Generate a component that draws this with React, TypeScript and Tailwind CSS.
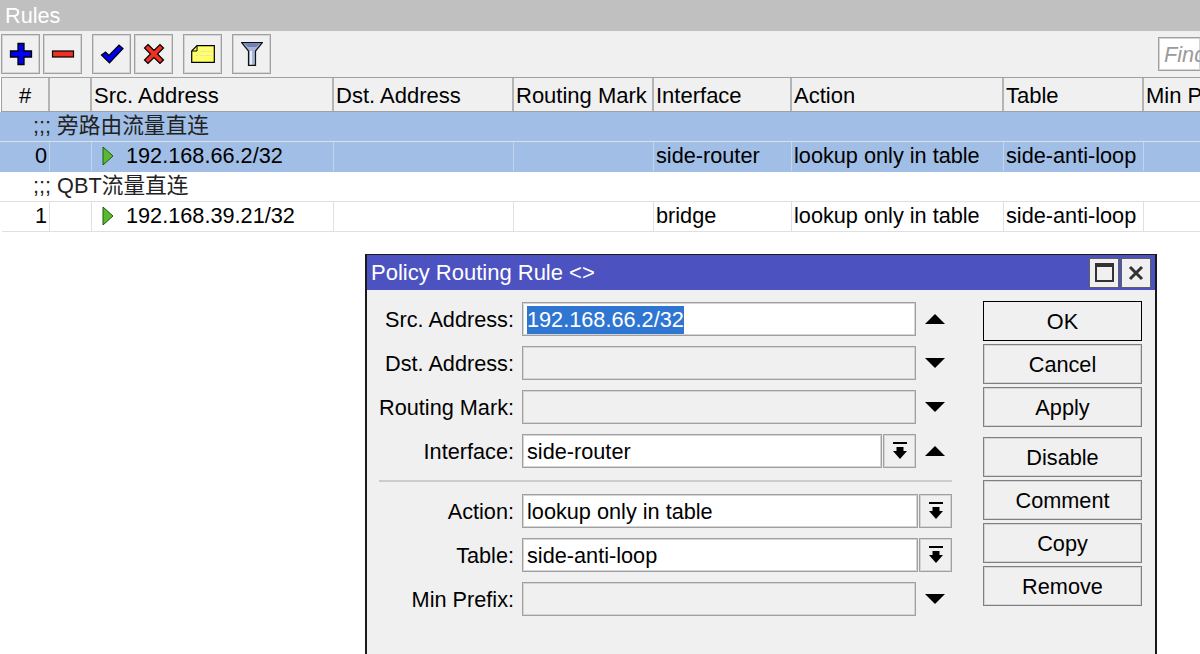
import type { ReactNode } from "react";

const columns = [
  { name: "#", width: "w-[48px] justify-center pr-[2px]" },
  { name: "", width: "w-[42px]" },
  { name: "Src. Address", width: "w-[242px]" },
  { name: "Dst. Address", width: "w-[180px]" },
  { name: "Routing Mark", width: "w-[140px]" },
  { name: "Interface", width: "w-[138px]" },
  { name: "Action", width: "w-[212px]" },
  { name: "Table", width: "w-[140px]" },
  { name: "Min Prefix", width: "flex-1" },
];

const rules = [
  { id: "0", comment: ";;; ", commentCjk: "旁路由流量直连", src: "192.168.66.2/32", iface: "side-router", selected: true },
  { id: "1", comment: ";;; QBT", commentCjk: "流量直连", src: "192.168.39.21/32", iface: "bridge", selected: false },
];

function ToolButton({ children, className = "" }: { children: ReactNode; className?: string }) {
  return (
    <div
      className={`flex h-10 w-[39px] items-center justify-center border border-[#a0a0a0] bg-[#f0f0f0] shadow-[inset_0_0_0_1px_#d4d4d4] ${className}`}
    >
      {children}
    </div>
  );
}

function Triangle({ up }: { up?: boolean }) {
  return (
    <svg width="20" height="10" viewBox="0 0 20 10" className="block">
      <path d={up ? "M10 0 L20 10 L0 10 Z" : "M0 0 L20 0 L10 10 Z"} fill="#000" />
    </svg>
  );
}

function DropButton({ className = "" }: { className?: string }) {
  return (
    <div
      className={`flex h-[34px] w-[33px] shrink-0 items-center justify-center border border-[#a0a0a0] bg-[#f0f0f0] shadow-[inset_0_0_0_1px_#d4d4d4] ${className}`}
    >
      <svg width="16" height="18" viewBox="0 0 16 18">
        <rect x="1" y="0" width="14" height="2" fill="#000" />
        <path d="M4.5 5 H11.5 V9 H15 L8 17 L1 9 H4.5 Z" fill="#000" />
      </svg>
    </div>
  );
}

function Field({ label, children, className = "" }: { label: string; children: ReactNode; className?: string }) {
  return (
    <div className={`flex h-[34px] items-center ${className}`}>
      <div className="w-[143px] shrink-0 pt-[2px] text-right">{label}</div>
      <div className="ml-2 flex min-w-0 flex-1 items-center">{children}</div>
    </div>
  );
}

function Input({ value, disabled, className = "" }: { value?: ReactNode; disabled?: boolean; className?: string }) {
  return (
    <div
      className={`flex h-[34px] shrink-0 items-center overflow-hidden border border-[#a0a0a0] pl-[4px] pt-[2px] shadow-[inset_0_0_0_1px_#d4d4d4] ${
        disabled ? "bg-[#f0f0f0]" : "bg-white"
      } ${className}`}
    >
      {value}
    </div>
  );
}

function ActionButton({ label, primary }: { label: string; primary?: boolean }) {
  return (
    <div
      className={`flex h-10 w-[159px] items-center justify-center border bg-[#f0f0f0] pt-[2px] ${
        primary ? "border-black" : "border-[#808080] shadow-[inset_0_0_0_1px_#d4d4d4]"
      }`}
    >
      {label}
    </div>
  );
}

export default function App() {
  return (
    <div
      className="relative h-[654px] w-[1200px] overflow-hidden bg-white text-[21.7px] leading-none text-black"
      style={{ fontFamily: '"Liberation Sans", "Noto Sans CJK SC", sans-serif' }}
    >
      <div className="flex h-[31px] items-center bg-[#c0c0c0] pl-[5px] text-white">Rules</div>

      <div className="flex h-[46px] items-center bg-[#f0f0f0] pl-[1px]">
        <ToolButton>
          <svg width="24" height="24" viewBox="0 0 24 24">
            <path d="M9 1.5 H15 V9 H22.5 V15 H15 V22.5 H9 V15 H1.5 V9 H9 Z" fill="#0000f0" stroke="#000" strokeWidth="1.3" />
          </svg>
        </ToolButton>
        <ToolButton className="ml-[3px]">
          <svg width="24" height="8" viewBox="0 0 24 8">
            <rect x="1.5" y="1" width="21" height="6" fill="#ee3124" stroke="#000" strokeWidth="1.2" />
          </svg>
        </ToolButton>
        <ToolButton className="ml-[10px]">
          <svg width="24" height="20" viewBox="0 0 24 20">
            <path d="M1.5 11 L5.5 8 L9 11.5 L19 1 L23 4.5 L9.5 19 Z" fill="#0000f0" stroke="#000" strokeWidth="1.2" />
          </svg>
        </ToolButton>
        <ToolButton className="ml-[3px]">
          <svg width="22" height="22" viewBox="0 0 22 22">
            <path d="M5 1.5 L11 7.5 L17 1.5 L20.5 5 L14.5 11 L20.5 17 L17 20.5 L11 14.5 L5 20.5 L1.5 17 L7.5 11 L1.5 5 Z" fill="#ee3124" stroke="#000" strokeWidth="1.2" />
          </svg>
        </ToolButton>
        <ToolButton className="ml-[10px]">
          <svg width="24" height="18" viewBox="0 0 24 18">
            <path d="M6 0.7 H23.3 V17.3 H0.7 V6 Z" fill="#ffff66" stroke="#000" strokeWidth="1.2" />
            <path d="M1 6 H6 V1" fill="none" stroke="#000" strokeWidth="1" />
            <path d="M10 6.5 H21 M4 10.5 H21" stroke="#e0e0c8" strokeWidth="1" strokeDasharray="4 1" />
          </svg>
        </ToolButton>
        <ToolButton className="ml-[10px]">
          <svg width="22" height="24" viewBox="0 0 22 24">
            <path d="M0.7 0.7 H21.3 L14.5 9 V23.3 H7.5 V9 Z" fill="#a6b4d8" stroke="#111" strokeWidth="1.2" />
            <path d="M3 1.5 H19 L15 5 H7 Z" fill="#7080b8" />
            <path d="M9 9 H11 V22.5 H9 Z" fill="#e6ecf8" />
          </svg>
        </ToolButton>
        <div className="ml-auto flex h-[34px] w-[42px] items-center overflow-hidden border border-r-0 border-[#a0a0a0] bg-white pl-[5px] pt-[2px] italic text-[#9a9a9a] shadow-[inset_0_0_0_1px_#d4d4d4]">
          Find
        </div>
      </div>

      <div className="ml-[1px] flex h-[35px] border border-r-0 border-[#a0a0a0] bg-[#f0f0f0] text-[22px]">
        {columns.map((col, i) => (
          <div
            key={i}
            className={`flex items-center overflow-hidden whitespace-nowrap border-r-2 border-[#b4b4b4] pl-[2px] pt-[2px] last:border-r-0 ${col.width}`}
          >
            {col.name}
          </div>
        ))}
      </div>

      {rules.map((rule) => (
        <div key={rule.id} className={rule.selected ? "bg-[#a0bee6]" : "bg-white"}>
          <div className="flex h-[30px] items-center border-b border-[#e0e0e0] pb-[2px] pl-[33px] text-[#222]">
            <span className="whitespace-pre">{rule.comment}</span>
            <span>{rule.commentCjk}</span>
          </div>
          <div className={`ml-[2px] flex h-[30px] border-b ${rule.selected ? "border-[#a0bee6]" : "border-[#e0e0e0]"}`}>
            {columns.map((col, i) => {
              const base = `flex items-center overflow-hidden whitespace-nowrap border-r pb-[2px] pl-[2px] last:border-r-0 ${
                rule.selected ? "border-[#c0d4ee]" : "border-[#e0e0e0]"
              } ${col.width}`;
              if (i === 0) {
                return (
                  <div key={i} className={`${base} !justify-end !pr-[2px]`}>
                    {rule.id}
                  </div>
                );
              }
              if (i === 2) {
                return (
                  <div key={i} className={`${base} !pl-[10px]`}>
                    <svg width="12" height="20" viewBox="0 0 12 20" className="shrink-0">
                      <path d="M1 1 L11 10 L1 19 Z" fill="#5cb82e" stroke="#1d5c12" strokeWidth="1" />
                    </svg>
                    <span className="ml-[12px]">{rule.src}</span>
                  </div>
                );
              }
              const text =
                i === 5 ? rule.iface : i === 6 ? "lookup only in table" : i === 7 ? "side-anti-loop" : "";
              return (
                <div key={i} className={base}>
                  {text}
                </div>
              );
            })}
          </div>
        </div>
      ))}

      <div className="absolute left-[365px] top-[254px] h-[420px] w-[792px] border-2 border-t border-[#1a1a1a] bg-[#f0f0f0]">
        <div className="flex h-[35px] items-center justify-between bg-[#4c52c0] pl-[4px] pr-[4px] text-[22px] text-white">
          <span>Policy Routing Rule &lt;&gt;</span>
          <div className="flex gap-[2px]">
            <div className="flex h-[30px] w-[30px] items-center justify-center border border-[#606060] bg-[#f0f0f0]">
              <div className="h-[19px] w-[19px] border-2 border-t-4 border-[#333]" />
            </div>
            <div className="flex h-[30px] w-[30px] items-center justify-center border border-[#606060] bg-[#f0f0f0]">
              <svg width="16" height="16" viewBox="0 0 16 16">
                <path d="M2 2 L14 14 M14 2 L2 14" stroke="#333" strokeWidth="3" />
              </svg>
            </div>
          </div>
        </div>

        <div className="flex pl-[4px] pt-[12px]">
          <div className="flex w-[581px] shrink-0 flex-col">
            <div className="flex flex-col gap-[10px]">
              <Field label="Src. Address:">
                <Input
                  className="w-[394px]"
                  value={<span className="bg-[#2f76d2] py-[3px] text-white">192.168.66.2/32</span>}
                />
                <span className="ml-[9px]"><Triangle up /></span>
              </Field>
              <Field label="Dst. Address:">
                <Input className="w-[394px]" disabled />
                <span className="ml-[9px]"><Triangle /></span>
              </Field>
              <Field label="Routing Mark:">
                <Input className="w-[394px]" disabled />
                <span className="ml-[9px]"><Triangle /></span>
              </Field>
              <Field label="Interface:">
                <Input className="w-[360px]" value="side-router" />
                <DropButton className="ml-[1px]" />
                <span className="ml-[9px]"><Triangle up /></span>
              </Field>
            </div>
            <div className="my-3 ml-[8px] h-[2px] w-[573px] bg-[#cccccc]" />
            <div className="flex flex-col gap-[10px]">
              <Field label="Action:">
                <Input className="w-[396px]" value="lookup only in table" />
                <DropButton className="ml-[1px]" />
              </Field>
              <Field label="Table:">
                <Input className="w-[396px]" value="side-anti-loop" />
                <DropButton className="ml-[1px]" />
              </Field>
              <Field label="Min Prefix:">
                <Input className="w-[394px]" disabled />
                <span className="ml-[9px]"><Triangle /></span>
              </Field>
            </div>
          </div>
          <div className="ml-[31px] -mt-px flex flex-col">
            <div className="flex flex-col gap-[3px]">
              <ActionButton label="OK" primary />
              <ActionButton label="Cancel" />
              <ActionButton label="Apply" />
            </div>
            <div className="mt-[10px] flex flex-col gap-[3px]">
              <ActionButton label="Disable" />
              <ActionButton label="Comment" />
              <ActionButton label="Copy" />
              <ActionButton label="Remove" />
            </div>
          </div>
        </div>
      </div>
    </div>
  );
}
